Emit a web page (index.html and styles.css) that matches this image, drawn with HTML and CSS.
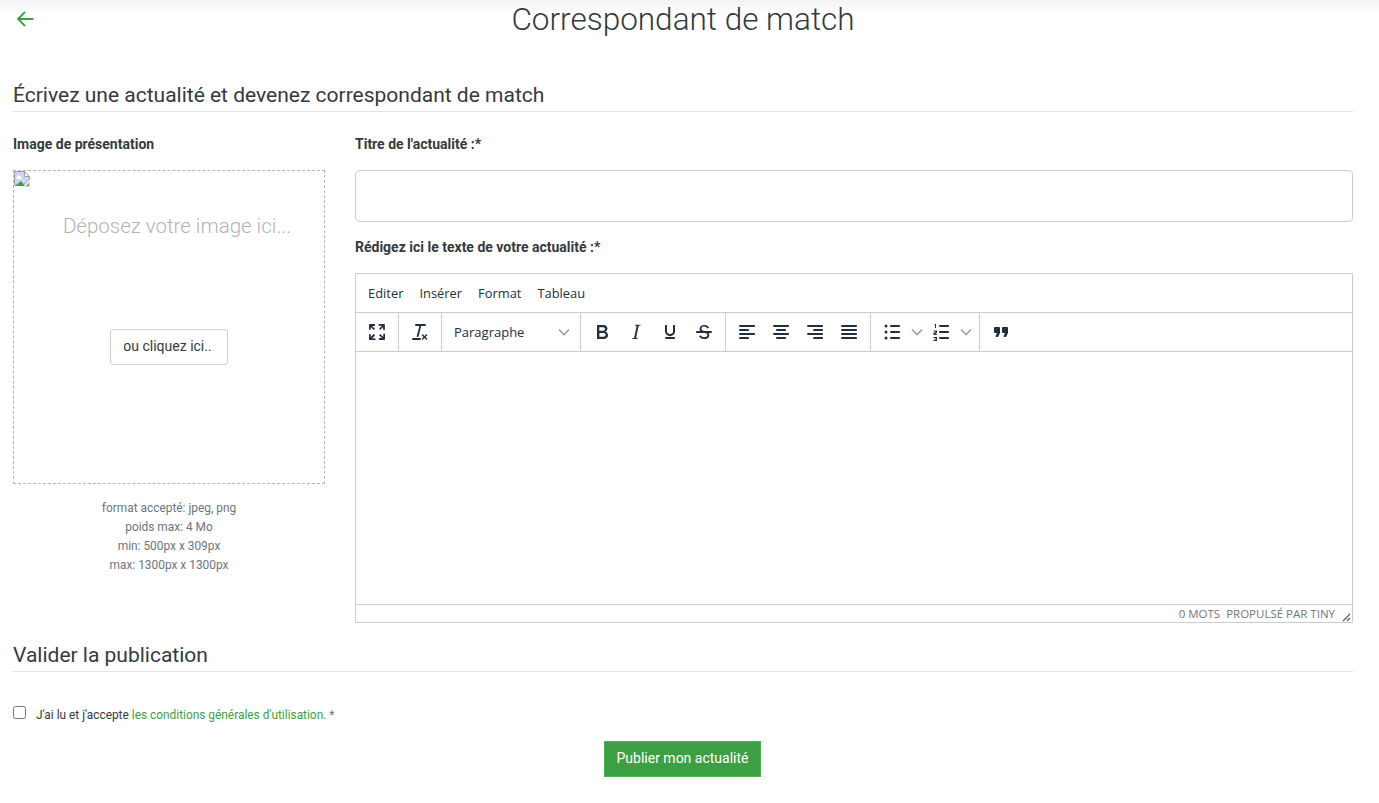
FILE: index.html
```html
<!DOCTYPE html>
<html lang="fr">
<head>
<meta charset="utf-8">
<title>Correspondant de match</title>
<link rel="stylesheet" href="styles.css">
</head>
<body>
<div class="topshade"></div>
<header class="pagehead">
  <a class="back" href="#" aria-label="Retour">
    <svg width="18" height="16" viewBox="0 0 18 16"><path d="M17.500 8H2M9 1 2 8l7 7" fill="none" stroke="#3c9f43" stroke-width="1.800"/></svg>
  </a>
  <h1>Correspondant de match</h1>
</header>
<main class="page">
  <h2 class="section first">Écrivez une actualité et devenez correspondant de match</h2>
  <div class="cols">
    <div class="left">
      <label class="lab">Image de présentation</label>
      <div class="drop">
        <svg class="broken" width="16" height="16" viewBox="0 0 16 16"><path d="M.5.5h10l5 5v3L9 14.500H.5z" fill="#c9d7f1" stroke="#a0a0a0"/><path d="M10.500.5v5h5z" fill="#fff" stroke="#a0a0a0"/><path d="M3 6c0-2 4-2 4 0 1 0 1 2 0 2H3C2 8 2 6 3 6z" fill="#fff"/><path d="M1 15l6-5 4 5z" fill="#3f9f3f"/><path d="M11 15.500l4.500-4.500v4.500z" fill="#9a9a9a"/></svg>
        <p class="dz">Déposez votre image ici...</p>
        <button class="pick" type="button">ou cliquez ici..</button>
      </div>
      <div class="hint">format accepté: jpeg, png<br>poids max: 4 Mo<br>min: 500px x 309px<br>max: 1300px x 1300px</div>
    </div>
    <div class="right">
      <label class="lab">Titre de l'actualité :*</label>
      <input class="title" type="text">
      <label class="lab lab2">Rédigez ici le texte de votre actualité :*</label>
      <div class="editor">
        <div class="menubar"><span>Editer</span><span>Insérer</span><span>Format</span><span>Tableau</span></div>
        <div class="toolbar">
          <div class="grp g1">
            <svg class="ic" viewBox="0 0 24 24"><path d="M15.300 10l-1.200-1.300 2.900-3h-2.300a.9.900 0 1 1 0-1.700H19c.5 0 .9.400.9.900v4.400a.9.900 0 1 1-1.800 0V7l-2.900 3zm0 4l3 3v-2.300a.9.900 0 1 1 1.700 0V19c0 .5-.4.900-.9.900h-4.400a.9.900 0 1 1 0-1.800H17l-3-2.900 1.300-1.200zM10 15.400l-2.900 3h2.300a.9.900 0 1 1 0 1.700H5a.9.900 0 0 1-1-.9v-4.400a.9.900 0 1 1 1.800 0V17l2.900-3 1.200 1.300zM8.700 10L5.700 7v2.300a.9.900 0 0 1-1.700 0V5c0-.5.400-.9.900-.9h4.400a.9.900 0 0 1 0 1.800H7l3 2.900L8.700 10z"/></svg>
          </div>
          <div class="grp g1">
            <svg class="ic" viewBox="0 0 24 24"><path d="M13.200 6a1 1 0 0 1 0 .2l-2.600 10a1 1 0 0 1-1 .8h-.2a.8.800 0 0 1-.6-1l2.600-10H8a1 1 0 1 1 0-2h9a1 1 0 0 1 0 2h-3.800zM5 18h7a1 1 0 0 1 0 2H5a1 1 0 0 1 0-2zm13 1.500L16.500 18 15 19.500a.7.700 0 0 1-1-1l1.500-1.500-1.500-1.500a.7.700 0 0 1 1-1l1.500 1.500 1.500-1.500a.7.700 0 0 1 1 1L17.500 17l1.500 1.500a.7.700 0 0 1-1 1z"/></svg>
          </div>
          <div class="grp g2">
            <span class="par">Paragraphe</span>
            <svg class="chev" viewBox="0 0 12 8"><path d="M1 1.500 6 6.500l5-5" fill="none" stroke="#9aa0a6" stroke-width="1.600"/></svg>
          </div>
          <div class="grp g3">
            <svg class="ic" viewBox="0 0 24 24"><path d="M7.800 19c-.3 0-.5 0-.6-.2l-.2-.5V5.700c0-.2 0-.4.200-.5l.6-.2h5c1.500 0 2.700.3 3.500 1 .7.600 1.100 1.400 1.100 2.500a3 3 0 0 1-.6 1.900c-.4.600-1 1-1.600 1.200.4.100.9.300 1.300.600s.8.700 1 1.200c.4.400.5 1 .5 1.600 0 1.300-.4 2.300-1.300 3-.8.700-2.100 1-3.800 1H7.800zm5-8.300c.6 0 1.200-.1 1.600-.5.400-.3.600-.7.600-1.300 0-1.100-.8-1.700-2.300-1.700H9.300v3.500h3.400zm.5 6c.7 0 1.300-.1 1.700-.4.400-.4.600-.9.600-1.500s-.2-1-.7-1.400c-.4-.3-1-.4-2-.4H9.400v3.800h4z"/></svg>
            <svg class="ic" viewBox="0 0 24 24"><path d="M16.700 4.700l-.1.900h-.3c-.6 0-1 0-1.400.3-.3.300-.4.600-.5 1.100l-2.100 9.800v.6c0 .5.400.8 1.400.8h.2l-.2.800H8l.2-.8h.2c1.100 0 1.800-.5 2-1.500l2-9.800.1-.5c0-.6-.4-.8-1.400-.8h-.3l.2-.9h5.800z"/></svg>
            <svg class="ic" viewBox="0 0 24 24"><path d="M16 5c.6 0 1 .4 1 1v5.500a4 4 0 0 1-.4 1.800l-1 1.400a5.300 5.300 0 0 1-5.500 1 5 5 0 0 1-1.600-1c-.5-.4-.8-.9-1.100-1.400a4 4 0 0 1-.4-1.800V6c0-.6.400-1 1-1s1 .4 1 1v5.500c0 .3 0 .6.200 1l.6.700a3.300 3.300 0 0 0 2.200.8 3.400 3.400 0 0 0 2.200-.8c.3-.2.400-.5.600-.8l.2-.9V6c0-.6.400-1 1-1zM8 17h8c.6 0 1 .4 1 1s-.4 1-1 1H8a1 1 0 0 1 0-2z"/></svg>
            <svg class="ic" viewBox="0 0 24 24"><path d="M15.600 8.500c-.5-.7-1-1.100-1.300-1.300-.6-.4-1.300-.6-2-.6-2.700 0-2.800 1.700-2.800 2.100 0 1.600 1.800 2 3.200 2.300 4.400.9 4.600 2.800 4.600 3.900 0 1.400-.7 4.100-5 4.100A6.200 6.200 0 0 1 7 16.400l1.500-1.100c.4.600 1.600 2 3.700 2 1.600 0 2.500-.4 3-1.200.4-.8.300-2-.8-2.600-.7-.4-1.600-.7-2.900-1-1-.2-3.900-.8-3.900-3.600C7.600 6 10.300 5 12.400 5c2.900 0 4.200 1.600 4.700 2.400l-1.500 1.100z"/><path d="M5 11h14a1 1 0 0 1 0 2H5a1 1 0 0 1 0-2z"/></svg>
          </div>
          <div class="grp g3">
            <svg class="ic" viewBox="0 0 24 24"><path d="M5 5h14c.6 0 1 .4 1 1s-.4 1-1 1H5a1 1 0 1 1 0-2zm0 4h8c.6 0 1 .4 1 1s-.4 1-1 1H5a1 1 0 1 1 0-2zm0 8h8c.6 0 1 .4 1 1s-.4 1-1 1H5a1 1 0 0 1 0-2zm0-4h14c.6 0 1 .4 1 1s-.4 1-1 1H5a1 1 0 0 1 0-2z"/></svg>
            <svg class="ic" viewBox="0 0 24 24"><path d="M5 5h14c.6 0 1 .4 1 1s-.4 1-1 1H5a1 1 0 1 1 0-2zm3 4h8c.6 0 1 .4 1 1s-.4 1-1 1H8a1 1 0 1 1 0-2zm0 8h8c.6 0 1 .4 1 1s-.4 1-1 1H8a1 1 0 0 1 0-2zm-3-4h14c.6 0 1 .4 1 1s-.4 1-1 1H5a1 1 0 0 1 0-2z"/></svg>
            <svg class="ic" viewBox="0 0 24 24"><path d="M5 5h14c.6 0 1 .4 1 1s-.4 1-1 1H5a1 1 0 1 1 0-2zm6 4h8c.6 0 1 .4 1 1s-.4 1-1 1h-8a1 1 0 0 1 0-2zm0 8h8c.6 0 1 .4 1 1s-.4 1-1 1h-8a1 1 0 0 1 0-2zm-6-4h14c.6 0 1 .4 1 1s-.4 1-1 1H5a1 1 0 0 1 0-2z"/></svg>
            <svg class="ic" viewBox="0 0 24 24"><path d="M5 5h14c.6 0 1 .4 1 1s-.4 1-1 1H5a1 1 0 1 1 0-2zm0 4h14c.6 0 1 .4 1 1s-.4 1-1 1H5a1 1 0 1 1 0-2zm0 4h14c.6 0 1 .4 1 1s-.4 1-1 1H5a1 1 0 0 1 0-2zm0 4h14c.6 0 1 .4 1 1s-.4 1-1 1H5a1 1 0 0 1 0-2z"/></svg>
          </div>
          <div class="grp g4">
            <svg class="ic" viewBox="0 0 24 24"><circle cx="6" cy="6" r="1.500"/><circle cx="6" cy="12" r="1.500"/><circle cx="6" cy="18" r="1.500"/><path d="M11 5h8c.6 0 1 .4 1 1s-.4 1-1 1h-8a1 1 0 0 1 0-2zm0 6h8c.6 0 1 .4 1 1s-.4 1-1 1h-8a1 1 0 0 1 0-2zm0 6h8c.6 0 1 .4 1 1s-.4 1-1 1h-8a1 1 0 0 1 0-2z"/></svg>
            <svg class="chev c2" viewBox="0 0 12 8"><path d="M1 1.500 6 6.500l5-5" fill="none" stroke="#9aa0a6" stroke-width="1.600"/></svg>
            <svg class="ic" viewBox="0 0 24 24"><path d="M11 5h8c.6 0 1 .4 1 1s-.4 1-1 1h-8a1 1 0 0 1 0-2zm0 6h8c.6 0 1 .4 1 1s-.4 1-1 1h-8a1 1 0 0 1 0-2zm0 6h8c.6 0 1 .4 1 1s-.4 1-1 1h-8a1 1 0 0 1 0-2zM5.500 4H7v4H6V5H5.500zM4.500 10.500H8v2.200L5.800 14H8v1H4.500v-2L7 11.500v-.1H4.500zM4.500 17H8v4H4.500v-1H7v-.6H5.500v-.8H7V18H4.500z"/></svg>
            <svg class="chev c2" viewBox="0 0 12 8"><path d="M1 1.500 6 6.500l5-5" fill="none" stroke="#9aa0a6" stroke-width="1.600"/></svg>
          </div>
          <div class="grp last">
            <svg class="ic" viewBox="0 0 24 24"><path d="M7.500 17h.9c.4 0 .7-.2.9-.6L11 13V8c0-.6-.4-1-1-1H6a1 1 0 0 0-1 1v4c0 .6.400 1 1 1h2l-1.300 2.700a1 1 0 0 0 .8 1.300zm8 0h.9c.4 0 .7-.2.9-.6L19 13V8c0-.6-.4-1-1-1h-4a1 1 0 0 0-1 1v4c0 .6.400 1 1 1h2l-1.300 2.700a1 1 0 0 0 .8 1.300z"/></svg>
          </div>
        </div>
        <div class="area"></div>
        <div class="status">
          <span>0 MOTS</span><span class="tiny">PROPULSÉ PAR TINY</span>
          <svg class="grip" width="10" height="10" viewBox="0 0 10 10"><path d="M9 2 2 9M9 6 6 9" stroke="#555" stroke-width="1.100" fill="none"/></svg>
        </div>
      </div>
    </div>
  </div>
  <h2 class="section second">Valider la publication</h2>
  <div class="accept">
    <input type="checkbox" class="cb">
    <span>J'ai lu et j'accepte <a href="#">les conditions générales d'utilisation.</a> <em>*</em></span>
  </div>
  <div class="submit"><button type="button">Publier mon actualité</button></div>
</main>
</body>
</html>
```
FILE: styles.css
```css
* { box-sizing: border-box; }
html, body { margin: 0; padding: 0; }
body {
  position: relative;
  height: 803px;
  overflow: hidden;
  background: #fff;
  color: #343a40;
  font-family: Roboto, "Liberation Sans", sans-serif;
}
.topshade {
  position: absolute;
  left: 0; right: 0; top: 0;
  height: 14px;
  background: linear-gradient(#f3f3f3, #fff);
}
.pagehead { position: relative; height: 40px; padding: 1px 26px 0 13px; }
.back { position: absolute; left: 16px; top: 11px; line-height: 0; }
h1 {
  position: relative;
  margin: 0;
  text-align: center;
  font-size: 31.500px;
  font-weight: 300;
  line-height: 38px;
  color: #343a40;
}
.page { padding: 0 26px 0 13px; }
.section {
  margin: 0;
  font-size: 21px;
  font-weight: 400;
  line-height: 28px;
  color: #343a40;
  border-bottom: 1px solid #e3e3e3;
}
.section.first { margin-top: 41px; padding-bottom: 2px; }
.cols { display: flex; gap: 30px; margin-top: 22px; }
.left { width: 312px; flex: none; }
.right { flex: 1; min-width: 0; }
.lab {
  display: block;
  font-size: 14px;
  font-weight: 700;
  line-height: 20px;
  color: #343a40;
}
.lab2 { margin-top: 15px; }
.drop {
  position: relative;
  height: 314px;
  margin-top: 16px;
  border: 1px dashed #b5b5b5;
  text-align: center;
}
.broken { position: absolute; left: 0; top: 0; }
.dz {
  margin: 0;
  padding: 41px 0 0 16px;
  font-size: 20.500px;
  font-weight: 300;
  line-height: 28px;
  color: #b3b3b3;
}
.pick {
  display: block;
  margin: 89px auto 0;
  width: 118px;
  height: 36px;
  padding: 0 3px 2px 0;
  background: #fff;
  border: 1px solid #cfcfcf;
  border-radius: 3px;
  font: 400 14px Roboto, sans-serif;
  color: #343a40;
}
.hint {
  margin-top: 15px;
  text-align: center;
  font-size: 11.900px;
  line-height: 19px;
  color: #6c757d;
}
.title {
  display: block;
  width: 100%;
  height: 52px;
  margin-top: 16px;
  border: 1px solid #ccc;
  border-radius: 4px;
  background: #fff;
}
.editor {
  margin-top: 16px;
  height: 350px;
  display: flex;
  flex-direction: column;
  border: 1px solid #ccc;
  font-family: "Open Sans", "Noto Sans", sans-serif;
  color: #222f3e;
}
.menubar {
  display: flex;
  gap: 16px;
  height: 39px;
  align-items: center;
  padding-left: 12px;
  font-size: 12.900px;
  border-bottom: 1px solid #ccc;
}
.toolbar {
  display: flex;
  height: 39px;
  border-bottom: 1px solid #ccc;
}
.grp {
  display: flex;
  align-items: center;
  border-right: 1px solid #ccc;
}
.g1 { width: 43px; justify-content: center; }
.g2 { width: 139px; padding: 0 10px 0 12px; justify-content: space-between; font-size: 13px; }
.g3 { padding: 0 9px; gap: 10px; }
.g4 { padding-left: 9px; }
.last { border-right: 0; padding: 0 9px; }
.ic { width: 24px; height: 24px; fill: #222f3e; flex: none; }
.chev { width: 12px; height: 8px; flex: none; }
.c2 { margin: 0 6px 0 7px; }
.g4 .c2:last-child { margin-right: 7px; }
.area { flex: 1; }
.status {
  display: flex;
  height: 18px;
  align-items: center;
  justify-content: flex-end;
  padding-right: 1px;
  border-top: 1px solid #ccc;
  font-size: 11.500px;
  color: #70767f;
}
.tiny { margin-left: 6px; }
.grip { margin-left: 6px; margin-top: 6px; }
.section.second { margin-top: 18px; padding-bottom: 2px; }
.accept {
  display: flex;
  align-items: flex-start;
  margin-top: 34px;
  font-size: 11.880px;
  line-height: 18px;
  color: #343a40;
}
.cb { margin: 0 10px 0 0; width: 13px; height: 13px; }
.accept a { color: #3c9f43; text-decoration: none; }
.accept em { font-style: normal; color: #6c757d; }
.submit { text-align: center; margin-top: 17px; padding-right: 1px; }
.submit button {
  width: 157px;
  height: 36px;
  padding: 0 0 2px;
  background: #3c9f43;
  border: 1px solid #4bb54f;
  color: #fff;
  font: 400 14px Roboto, sans-serif;
}
```
